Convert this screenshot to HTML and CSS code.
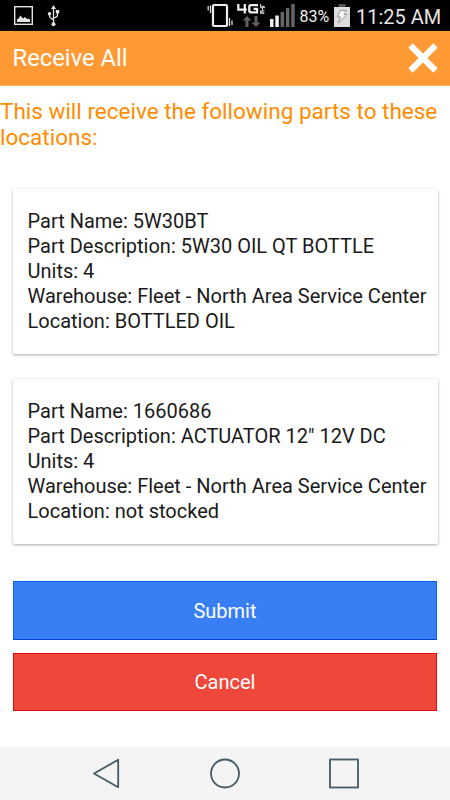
FILE: index.html
```html
<!DOCTYPE html>
<html lang="en">
<head>
<meta charset="utf-8">
<title>Receive All</title>
<link rel="stylesheet" href="styles.css">
</head>
<body>
<div class="screen">
  <div class="status">
    <svg class="status-left" width="60" height="31" viewBox="0 0 60 31">
      <rect x="14.700" y="6.700" width="17.600" height="17.600" fill="none" stroke="#e4e4e4" stroke-width="1.400"/>
      <path d="M17 22V19.500L18.500 18.500L20.500 15.500L23 18.500L25 17L27 19L29 18.500L30 20V22Z" fill="#e4e4e4"/>
      <path d="M53.500 8V24M49.500 13V16Q49.500 17.500 53.500 20M57.500 12V15Q57.500 17 53.500 18" fill="none" stroke="#e4e4e4" stroke-width="1.300"/>
      <path d="M53.500 5L56 9H51Z" fill="#e4e4e4"/>
      <circle cx="53.500" cy="24.300" r="2" fill="#e4e4e4"/>
      <circle cx="49.500" cy="13.700" r="1.700" fill="#e4e4e4"/>
      <rect x="55.800" y="10" width="3.400" height="3.400" fill="#e4e4e4"/>
    </svg>
    <div class="status-right">
      <svg width="93" height="31" viewBox="205 0 93 31">
        <rect x="213" y="5" width="14" height="21" rx="1" fill="none" stroke="#eee" stroke-width="2.200"/>
        <path d="M210.500 5.500V13M208.200 6V10.500M229.500 18V26M232 20.500V25" fill="none" stroke="#ddd" stroke-width="1.300"/>
        <path d="M238.300 4V9.700H246.800M244.800 4V13.500M258 5.200H250.300L249.300 6.200V11.300L250.300 12.300H257V8.900H253.500" fill="none" stroke="#eee" stroke-width="2.300"/>
        <path d="M260.500 4V6.300H264.500M260 7.700H265M262.500 7.700V10.300M264.500 10.900H260.500V13.300H264.500M260.500 12.100H264" fill="none" stroke="#ddd" stroke-width="1"/>
        <path d="M247 16L251.500 20.500H248.500V27H245.500V20.500H242.500ZM256 27L251.500 22.500H254.500V16H257.500V22.500H260.500Z" fill="#606060"/>
        <path d="M270 19H273.500V27H270ZM275.300 15.500H278.800V27H275.300Z" fill="#f0f0f0"/>
        <path d="M280.600 12H284.100V27H280.600ZM285.900 8H289.400V27H285.900ZM291.200 4H294.700V27H291.200Z" fill="#656565"/>
      </svg>
      <span class="percent">83%</span>
      <svg class="battery" width="16" height="31" viewBox="334 0 16 31">
        <rect x="338.500" y="4" width="7" height="3" fill="#555"/>
        <rect x="334" y="7" width="16" height="20" fill="#ddd"/>
        <path d="M340 10.500H346.500L344 14.500H347L338.500 23L340.500 17H337.500Z" fill="#f7f7f7" stroke="#999" stroke-width="1"/>
      </svg>
      <span class="time">11:25 AM</span>
    </div>
  </div>
  <header class="header">
    <h1 class="title">Receive All</h1>
    <svg class="close" width="32" height="32" viewBox="0 0 32 32"><path d="M3.500 3.500L28.500 28.500M28.500 3.500L3.500 28.500" stroke="#fff" stroke-width="6.200"/></svg>
  </header>
  <main class="content">
    <p class="intro">This will receive the following parts to these locations:</p>
    <section class="card">
      <div>Part Name: 5W30BT</div>
      <div>Part Description: 5W30 OIL QT BOTTLE</div>
      <div>Units: 4</div>
      <div>Warehouse: Fleet - North Area Service Center</div>
      <div>Location: BOTTLED OIL</div>
    </section>
    <section class="card">
      <div>Part Name: 1660686</div>
      <div>Part Description: ACTUATOR 12" 12V DC</div>
      <div>Units: 4</div>
      <div>Warehouse: Fleet - North Area Service Center</div>
      <div>Location: not stocked</div>
    </section>
    <div class="actions">
      <button class="button submit">Submit</button>
      <button class="button cancel">Cancel</button>
    </div>
  </main>
  <nav class="navbar">
    <svg width="450" height="53" viewBox="0 0 450 53" fill="none" stroke="#455a64" stroke-width="1.800">
      <path d="M94 26.500L118.200 12.800V40.200Z" stroke-linejoin="round"/>
      <circle cx="225" cy="26.500" r="14"/>
      <rect x="330" y="12.500" width="28" height="28"/>
    </svg>
  </nav>
</div>
</body>
</html>
```

FILE: styles.css
```css
* { box-sizing: border-box; }
body { margin: 0; background: #fff; font-family: Roboto, "Liberation Sans", sans-serif; }
svg { display: block; flex: none; }
.screen { width: 450px; height: 800px; display: flex; flex-direction: column; overflow: hidden; }
.status { height: 31px; flex: none; background: #000; display: flex; justify-content: space-between; color: #e4e4e4; }
.status-right { display: flex; width: 245px; white-space: nowrap; }
.percent { width: 36px; padding-left: 1.5px; font-size: 16px; line-height: 33px; color: #f0f0f0; }
.time { padding-left: 6px; font-size: 20px; line-height: 34px; }
.header { height: 55px; flex: none; background: #ff9933; display: flex; align-items: center; justify-content: space-between; padding: 0 11px 0 12.5px; border-bottom: 1px solid #ffb566; }
.title { margin: 0; font-size: 23.8px; font-weight: 400; line-height: 54px; color: #fff; }
.content { flex: 1; }
.intro { margin: 0 0 38.5px; padding-top: 12px; font-size: 22.5px; line-height: 26px; color: #ff8c00; }
.card { height: 165px; margin: 0 12.5px 25px; padding: 20px 15px; border-radius: 2px; background: #fff; box-shadow: 0 1px 3px rgba(0,0,0,.35); font-size: 20px; line-height: 25px; color: #1a1a1a; white-space: nowrap; }
.actions { display: flex; flex-direction: column; gap: 13px; margin: 37.5px 13px 0; }
.button { height: 59px; padding: 1px 0 0; border: 1px solid; font: 20px/56px Roboto, sans-serif; color: #fff; }
.submit { background: #387ef5; border-color: #0c60ee; border-bottom-color: #0a40d0; }
.cancel { height: 58px; padding: 0; background: #ef473a; border-color: #e00b0b; }
.navbar { height: 53px; flex: none; background: #f4f4f4; }
```
